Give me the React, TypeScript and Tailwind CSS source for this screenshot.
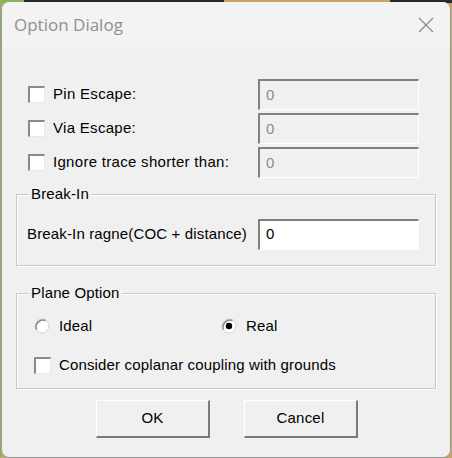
import React from "react";

const font = { fontFamily: '"Liberation Sans", Arial, sans-serif' };

function Check() {
  return (
    <div className="w-[17px] h-[17px] bg-white border-t-2 border-l-2 border-t-[#8a8a8a] border-l-[#8a8a8a] border-r border-b border-r-[#e8e8e8] border-b-[#e8e8e8] shrink-0" />
  );
}

function Radio({ checked = false }: { checked?: boolean }) {
  return (
    <svg width="16" height="16" viewBox="0 0 16 16" className="shrink-0">
      <circle cx="8" cy="8" r="7" fill="white" stroke="#d4d4d4" strokeWidth="1" />
      <path d="M2.5 11.5 A7 7 0 0 1 11.5 2.5" fill="none" stroke="#8a8a8a" strokeWidth="1.5" />
      {checked && <circle cx="8" cy="8" r="3.2" fill="#000" />}
    </svg>
  );
}

function Field({ disabled = true }: { disabled?: boolean }) {
  return (
    <div
      className={`w-[161px] h-[31px] border-t-2 border-l-2 border-t-[#808080] border-l-[#808080] border-r border-b border-r-white border-b-white flex items-center pl-[6px] text-[15px] ${
        disabled ? "bg-[#f0f0f0] text-[#8d8d8d]" : "bg-white text-black"
      }`}
    >
      0
    </div>
  );
}

function Button({ label }: { label: string }) {
  return (
    <div className="w-[114px] h-[38px] bg-[#f0f0f0] border-t border-l border-t-white border-l-white border-r-2 border-b-2 border-r-[#7a7a7a] border-b-[#7a7a7a] flex items-center justify-center text-[15px] text-black tracking-[0.2px]">
      {label}
    </div>
  );
}

export default function App() {
  return (
    <div className="w-[452px] h-[458px] bg-[#c7a46a] relative overflow-hidden">
      <div className="absolute left-0 top-0 w-[1px] h-full bg-[#8cb35a]" />
      <div className="absolute left-0 top-0 w-[60px] h-[3px] bg-[#8cb35a]" />
      <div className="absolute left-[24px] top-0 w-[200px] h-[3px] bg-[#1f2a22]" />
      <div className="absolute left-[390px] top-0 w-[62px] h-[3px] bg-[#2a2a2a]" />
      <div
        className="absolute left-[1px] top-[2px] w-[450px] h-[456px] bg-[#f0f0f0] rounded-[8px] border-l border-r border-b border-[#9a9a9a] border-t-0 flex flex-col"
        style={font}
      >
        <div className="h-[45px] bg-[#f3f3f3] rounded-t-[8px] flex items-center justify-between pl-[12px] pr-[16px] shrink-0">
          <span className="text-[17px] text-[#8f8f8f]" style={{ fontFamily: '"Open Sans", "Noto Sans", sans-serif' }}>
            Option Dialog
          </span>
          <svg width="16" height="16" viewBox="0 0 16 16">
            <path d="M1 1 L15 15 M15 1 L1 15" stroke="#8a8a8a" strokeWidth="1.2" />
          </svg>
        </div>

        <div className="flex flex-col pl-[14px] pr-[14px] pt-[32px] text-[15px] text-black tracking-[0.15px]">
          <div className="flex flex-col gap-[3px]">
            {["Pin Escape:", "Via Escape:", "Ignore trace shorter than:"].map((t) => (
              <div key={t} className="flex items-center justify-between pl-[12px] pr-[17px]">
                <div className="flex items-center gap-[8px]">
                  <Check />
                  <span className="tracking-[0.3px]">{t}</span>
                </div>
                <Field />
              </div>
            ))}
          </div>

          <div className="relative mt-[16px] h-[72px] border border-[#c8c8c8] shadow-[inset_1px_1px_0_white,1px_1px_0_white]">
            <span className="absolute left-[12px] top-[-10px] bg-[#f0f0f0] px-[2px] leading-[18px]">Break-In</span>
            <div className="flex items-center justify-between h-full pt-[8px] pl-[10px] pr-[16px]">
              <span>Break-In ragne(COC + distance)</span>
              <Field disabled={false} />
            </div>
          </div>

          <div className="relative mt-[27px] h-[96px] border border-[#c8c8c8] shadow-[inset_1px_1px_0_white,1px_1px_0_white]">
            <span className="absolute left-[12px] top-[-10px] bg-[#f0f0f0] px-[2px] leading-[18px]">Plane Option</span>
            <div className="flex flex-col pt-[23px] pl-[17px]">
              <div className="flex items-center h-[18px]">
                <div className="flex items-center gap-[9px] w-[187px]">
                  <Radio />
                  <span>Ideal</span>
                </div>
                <div className="flex items-center gap-[9px]">
                  <Radio checked />
                  <span>Real</span>
                </div>
              </div>
              <div className="flex items-center gap-[8px] mt-[19px]">
                <Check />
                <span>Consider coplanar coupling with grounds</span>
              </div>
            </div>
          </div>

          <div className="flex gap-[34px] mt-[11px] pl-[80px]">
            <Button label="OK" />
            <Button label="Cancel" />
          </div>
        </div>
      </div>
    </div>
  );
}
